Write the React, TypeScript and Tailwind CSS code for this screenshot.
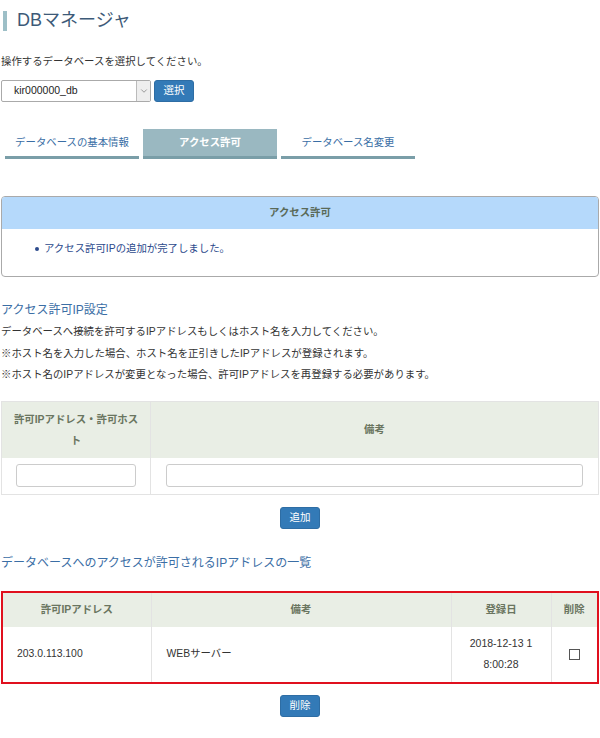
import React from 'react';
import { ChevronDown } from 'lucide-react';

const font = { fontFamily: '"Liberation Sans", "Noto Sans CJK JP", sans-serif' };

const tabs = [
  { label: 'データベースの基本情報', active: false },
  { label: 'アクセス許可', active: true },
  { label: 'データベース名変更', active: false },
];

const notes = [
  'データベースへ接続を許可するIPアドレスもしくはホスト名を入力してください。',
  '※ホスト名を入力した場合、ホスト名を正引きしたIPアドレスが登録されます。',
  '※ホスト名のIPアドレスが変更となった場合、許可IPアドレスを再登録する必要があります。',
];

const BlueButton: React.FC<{ label: string }> = ({ label }) => (
  <button className="h-[22px] w-[40px] rounded-[3px] border border-[#2e6da4] bg-[#337ab7] text-[10.5px] text-white">
    {label}
  </button>
);

const App: React.FC = () => {
  return (
    <div style={font} className="w-[600px] bg-white px-[1px] text-[10.4px] text-[#333]">
      {/* title */}
      <div className="flex h-[40px] items-center pt-[1px]">
        <div className="ml-[2px] h-[20px] w-[4px] bg-[#9dbfc7]" />
        <h1 className="ml-[10px] text-[18px] font-normal text-[#3d5a78]">DBマネージャ</h1>
      </div>

      <p className="mt-[13px] leading-[18px]">操作するデータベースを選択してください。</p>

      <div className="mt-[9px] flex items-center gap-[3px]">
        <div className="flex h-[22px] w-[150px] items-center rounded-[2px] border border-[#aaa] bg-white">
          <span className="flex-1 pl-[12px] text-[10.5px] text-[#222]">kir000000_db</span>
          <span className="flex h-full w-[14px] items-center justify-center border-l border-[#bbb] bg-[#eee]">
            <ChevronDown size={10} className="text-[#666]" strokeWidth={1.5} />
          </span>
        </div>
        <BlueButton label="選択" />
      </div>

      {/* tabs */}
      <div className="mt-[27px] flex gap-[4px] pl-[4px]">
        {tabs.map((t) => (
          <div
            key={t.label}
            className={`flex h-[30px] w-[134px] items-center justify-center border-b-[3px] border-[#7a9ea8] ${
              t.active ? 'bg-[#9ab8c1] font-bold text-white' : 'bg-white text-[#3a6ea5]'
            }`}
          >
            {t.label}
          </div>
        ))}
      </div>

      {/* alert */}
      <div className="mt-[37px] overflow-hidden rounded-[4px] border border-[#aaa]">
        <div className="flex h-[32px] items-center justify-center bg-[#b5d9fb] font-bold text-[#5a6a58]">
          アクセス許可
        </div>
        <ul className="flex h-[47px] items-start pl-[33px] pt-[12px] text-[#2c4a8c]">
          <li className="flex items-center gap-[5px]">
            <span className="h-[4px] w-[4px] rounded-full bg-[#2c4a8c]" />
            アクセス許可IPの追加が完了しました。
          </li>
        </ul>
      </div>

      <h2 className="mt-[24px] text-[12px] leading-[18px] text-[#3b6ea5]">アクセス許可IP設定</h2>
      <div className="mt-[2px]">
        {notes.map((n) => (
          <p key={n} className="leading-[21.5px]">{n}</p>
        ))}
      </div>

      {/* add form */}
      <table className="mt-[15px] w-full border-collapse border border-[#e3e3e3]">
        <thead>
          <tr className="bg-[#e9eee5] font-bold text-[#6a7560]">
            <th className="h-[57px] w-[149px] border-r border-[#e3e3e3] px-[9px] leading-[21px]">
              許可IPアドレス・許可ホスト
            </th>
            <th>備考</th>
          </tr>
        </thead>
        <tbody>
          <tr>
            <td className="h-[36px] border-r border-[#e3e3e3] px-[14px]">
              <div className="h-[23px] rounded-[3px] border border-[#ccc]" />
            </td>
            <td className="px-[15px]">
              <div className="h-[23px] rounded-[3px] border border-[#ccc]" />
            </td>
          </tr>
        </tbody>
      </table>

      <div className="mt-[12px] flex justify-center">
        <BlueButton label="追加" />
      </div>

      <h2 className="mt-[25px] text-[12px] leading-[18px] text-[#3b6ea5]">
        データベースへのアクセスが許可されるIPアドレスの一覧
      </h2>

      {/* list */}
      <div className="mt-[19px] border-2 border-[#e0101e]">
        <table className="w-full border-collapse">
          <thead>
            <tr className="bg-[#e9eee5] font-bold text-[#6a7560]">
              <th className="h-[34px] w-[148px] border-r border-[#e3e3e3]">許可IPアドレス</th>
              <th className="w-[300px] border-r border-[#e3e3e3]">備考</th>
              <th className="w-[100px] border-r border-[#e3e3e3]">登録日</th>
              <th>削除</th>
            </tr>
          </thead>
          <tbody>
            <tr>
              <td className="h-[55px] border-r border-[#e3e3e3] pl-[14px]">203.0.113.100</td>
              <td className="border-r border-[#e3e3e3] pl-[15px]">WEBサーバー</td>
              <td className="border-r border-[#e3e3e3] px-[15px] text-center text-[10.5px] leading-[21px] break-all">
                2018-12-13 18:00:28
              </td>
              <td>
                <div className="mx-auto h-[11px] w-[11px] border border-[#555] bg-white" />
              </td>
            </tr>
          </tbody>
        </table>
      </div>

      <div className="mt-[11px] flex justify-center pb-[21px]">
        <BlueButton label="削除" />
      </div>
    </div>
  );
};

export default App;
